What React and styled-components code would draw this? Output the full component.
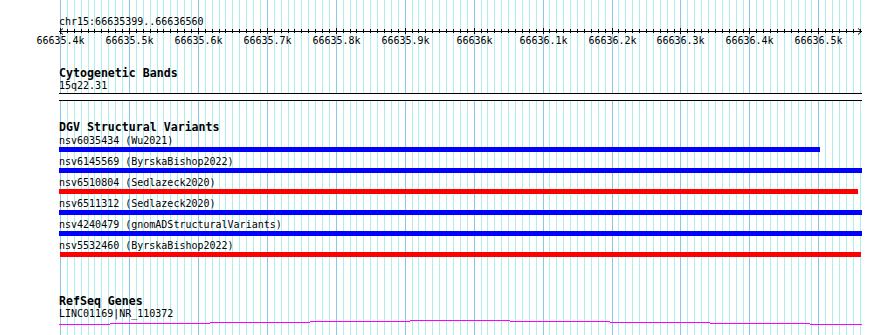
import styled, { createGlobalStyle } from "styled-components";

const GlobalStyle = createGlobalStyle`
  html, body {
    margin: 0;
    padding: 0;
    background: #fff;
  }
  body {
    font-family: "DejaVu Sans Mono", "Liberation Mono", monospace;
    color: #000;
  }
`;

const Page = styled.div`
  position: relative;
  width: 890px;
  height: 335px;
  overflow: hidden;
  background: #fff;
`;

const GridLayer = styled.svg`
  position: absolute;
  left: 0;
  top: 0;
  width: 890px;
  height: 335px;
`;

const Tracks = styled.div`
  position: relative;
  padding: 15px 0 0 59px;
`;

const Label = styled.div`
  height: 13px;
  font: 10px/13px "DejaVu Sans Mono", monospace;
  white-space: pre;
`;

const TrackTitle = styled.div`
  margin-top: ${(p) => p.$gap}px;
  height: 11px;
  font: bold 11.6px/11px "DejaVu Sans Mono", monospace;
  white-space: pre;
`;

const Ruler = styled.svg`
  display: block;
  width: 803px;
  height: 20px;
  overflow: visible;
  font-family: "DejaVu Sans Mono", monospace;
  font-size: 10px;
`;

const Band = styled.div`
  margin-top: 1px;
  width: 803px;
  height: 6px;
  border-top: 1px solid #000;
  border-bottom: 1px solid #000;
  background: #fff;
`;

const FeatureList = styled.div`
  margin-top: 1px;
  display: flex;
  flex-direction: column;
  gap: 3px;
`;

const Feature = styled.div`
  display: flex;
  flex-direction: column;
`;

const Bar = styled.div`
  height: 5px;
  width: ${(p) => p.$width}px;
  margin-left: ${(p) => p.$offset || 0}px;
  background: ${(p) => p.$color};
`;

const GeneLine = styled.svg`
  display: block;
  width: 803px;
  height: 6px;
`;

const START = 66635400;
const STEP = 6.894;
const gridX = (k) => Math.round(60 + k * STEP);
const ticks = Array.from({ length: 117 }, (_, k) => k);

const variants = [
  { name: "nsv6035434 (Wu2021)", color: "#0000ff", width: 761 },
  { name: "nsv6145569 (ByrskaBishop2022)", color: "#0000ff", width: 803 },
  { name: "nsv6510804 (Sedlazeck2020)", color: "#ff0000", width: 799 },
  { name: "nsv6511312 (Sedlazeck2020)", color: "#0000ff", width: 803 },
  { name: "nsv4240479 (gnomADStructuralVariants)", color: "#0000ff", width: 803 },
  { name: "nsv5532460 (ByrskaBishop2022)", color: "#ff0000", width: 801, offset: 1 },
];

const geneSteps = [
  [59, 110, 324],
  [110, 210, 323],
  [210, 310, 322],
  [310, 410, 321],
  [410, 510, 320],
  [510, 610, 321],
  [610, 710, 322],
  [710, 810, 323],
  [810, 862, 324],
];

function formatKb(k) {
  const bp = START + k * 10;
  return `${parseFloat((bp / 1000).toFixed(1))}k`;
}

export default function App() {
  return (
    <>
      <GlobalStyle />
      <Page>
        <GridLayer viewBox="0 0 890 335">
          {ticks.map((k) => (
            <line
              key={k}
              x1={gridX(k) + 0.5}
              x2={gridX(k) + 0.5}
              y1={0}
              y2={335}
              stroke={k % 10 === 0 ? "#88c6ea" : "#aeeeee"}
              strokeWidth={1}
            />
          ))}
        </GridLayer>
        <Tracks>
          <Label>chr15:66635399..66636560</Label>
          <Ruler viewBox="0 0 803 20">
            <line x1={0} x2={803} y1={3.5} y2={3.5} stroke="#000" />
            <polyline points="4,0.5 0.5,3.5 4,6.5" fill="none" stroke="#000" />
            <polyline points="799,0.5 802.5,3.5 799,6.5" fill="none" stroke="#000" />
            {ticks.map((k) => {
              const x = gridX(k) - 59 + 0.5;
              const major = k % 10 === 0;
              return (
                <line
                  key={k}
                  x1={x}
                  x2={x}
                  y1={major ? 0 : 1}
                  y2={major ? 6 : 5}
                  stroke="#000"
                />
              );
            })}
            {ticks
              .filter((k) => k % 10 === 0)
              .map((k) => (
                <text key={k} x={gridX(k) - 59 + 0.5} y={16} textAnchor="middle" fill="#000">
                  {formatKb(k)}
                </text>
              ))}
          </Ruler>

          <TrackTitle $gap={20}>Cytogenetic Bands</TrackTitle>
          <Label>15q22.31</Label>
          <Band />

          <TrackTitle $gap={21}>DGV Structural Variants</TrackTitle>
          <FeatureList>
            {variants.map((v) => (
              <Feature key={v.name}>
                <Label>{v.name}</Label>
                <Bar $color={v.color} $width={v.width} $offset={v.offset} />
              </Feature>
            ))}
          </FeatureList>

          <TrackTitle $gap={39}>RefSeq Genes</TrackTitle>
          <Label>LINC01169|NR_110372</Label>
          <GeneLine viewBox="0 0 803 6">
            {geneSteps.map(([x1, x2, y]) => (
              <rect key={x1} x={x1 - 59} y={y - 320} width={x2 - x1} height={1} fill="#ff00ff" />
            ))}
          </GeneLine>
        </Tracks>
      </Page>
    </>
  );
}
